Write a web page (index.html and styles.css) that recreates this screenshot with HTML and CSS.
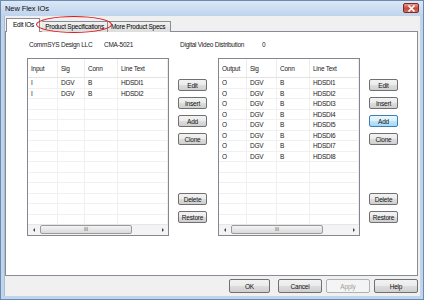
FILE: index.html
```html
<!DOCTYPE html>
<html lang="en">
<head>
  <meta charset="UTF-8" />
  <title>New Flex IOs</title>
  <link rel="stylesheet" href="styles.css">
</head>
<body>
  <div class="window">
    <div class="titlebar">
      <span class="title">New Flex IOs</span>
      <div class="close">
        <svg width="9" height="7" viewBox="0 0 9 7"><path d="M1.5 0.5 L7.5 6.5 M7.5 0.5 L1.5 6.5" stroke="#fff" stroke-width="1.6"/></svg>
      </div>
    </div>

    <div class="body">
      <div class="tabs">
        <div class="tab active">Edit IOs</div>
        <div class="tab">Product Specifications</div>
        <div class="tab last">More Product Specs</div>
      </div>
      <div class="mark"></div>

      <div class="panel">
        <div class="info">
          <span>CommSYS Design LLC</span>
          <span>CMA-5021</span>
          <span>Digital Video Distribution</span>
          <span>0</span>
        </div>

        <div class="lists">
          <div class="list in">
            <div class="rows" id="inRows"></div>
            <div class="hscroll">
              <span class="arrow left"></span>
              <div class="track"><div class="thumb">III</div></div>
              <span class="arrow right"></span>
            </div>
          </div>
          <div class="btncol">
            <button class="btn">Edit</button>
            <button class="btn">Insert</button>
            <button class="btn">Add</button>
            <button class="btn">Clone</button>
            <button class="btn push">Delete</button>
            <button class="btn">Restore</button>
          </div>

          <div class="list out">
            <div class="rows" id="outRows"></div>
            <div class="hscroll">
              <span class="arrow left"></span>
              <div class="track"><div class="thumb">III</div></div>
              <span class="arrow right"></span>
            </div>
          </div>
          <div class="btncol">
            <button class="btn">Edit</button>
            <button class="btn">Insert</button>
            <button class="btn default">Add</button>
            <button class="btn">Clone</button>
            <button class="btn push">Delete</button>
            <button class="btn">Restore</button>
          </div>
        </div>
      </div>

      <div class="footer">
        <button class="btn wide">OK</button>
        <button class="btn wide">Cancel</button>
        <button class="btn wide disabled">Apply</button>
        <button class="btn wide">Help</button>
      </div>
    </div>
  </div>

  <script>
    const inputs = [
      ['I', 'DGV', 'B', 'HDSDI1'],
      ['I', 'DGV', 'B', 'HDSDI2']
    ];
    const outputs = [];
    for (let i = 1; i <= 8; i++) outputs.push(['O', 'DGV', 'B', 'HDSDI' + i]);

    function fill(id, head, data) {
      const box = document.getElementById(id);
      const h = document.createElement('div');
      h.className = 'row head';
      head.forEach(t => {
        const c = document.createElement('span');
        c.textContent = t;
        h.appendChild(c);
      });
      box.appendChild(h);
      for (let r = 0; r < 15; r++) {
        const row = document.createElement('div');
        row.className = 'row';
        for (let k = 0; k < 4; k++) {
          const c = document.createElement('span');
          c.textContent = data[r] ? data[r][k] : '';
          row.appendChild(c);
        }
        box.appendChild(row);
      }
    }

    fill('inRows', ['Input', 'Sig', 'Conn', 'Line Text'], inputs);
    fill('outRows', ['Output', 'Sig', 'Conn', 'Line Text'], outputs);
  </script>
</body>
</html>
```

FILE: styles.css
```css
* {
  box-sizing: border-box;
}

body {
  margin: 0;
  font-family: 'Liberation Sans', Arial, sans-serif;
  font-size: 6.5px;
  letter-spacing: -0.25px;
  color: #000;
  background: #fff;
}

.window {
  width: 424px;
  height: 300px;
  background: #c0d5ec;
  border: 1px solid #6d8bb0;
  padding: 0 3px 3px 3px;
  display: flex;
  flex-direction: column;
}

.titlebar {
  height: 15px;
  margin: 0 -3px;
  padding: 0 4px 0 4px;
  display: flex;
  align-items: center;
  justify-content: space-between;
  background: linear-gradient(#dbe8f6, #bed3ec);
}

.title {
  font-size: 7.5px;
  letter-spacing: -0.1px;
  color: #111;
}

.close {
  width: 16px;
  height: 10px;
  margin-top: -1px;
  border: 1px solid #7a2b25;
  border-radius: 2px;
  background: linear-gradient(#e69a8e, #c74a3a 55%, #d0705e);
  display: flex;
  align-items: center;
  justify-content: center;
}

.body {
  position: relative;
  flex: 1;
  background: #f0f0f0;
  border-left: 1px solid #a9bcd2;
  padding: 2px 2px 0 0;
  display: flex;
  flex-direction: column;
}

.tabs {
  display: flex;
  align-items: flex-end;
  height: 14px;
  margin-left: 1px;
  position: relative;
  z-index: 1;
}

.tab {
  height: 11px;
  padding: 0 3px;
  line-height: 10px;
  border: 1px solid #898c95;
  border-bottom: none;
  border-left: none;
  background: linear-gradient(#f2f2f2, #dcdcdc);
  white-space: nowrap;
}

.tab.last {
  padding: 0 5px 0 3px;
}

.tab.active {
  height: 14px;
  padding: 1px 5px 0 6px;
  border-left: 1px solid #898c95;
  background: #fff;
  margin-right: 2px;
}

.mark {
  position: absolute;
  left: 31px;
  top: 0;
  width: 76px;
  height: 17px;
  border: 1.5px solid #e3161b;
  border-radius: 50%;
  z-index: 2;
}

.panel {
  height: 245px;
  margin-top: -1px;
  background: #fff;
  border: 1px solid #898c95;
  padding: 8px 0 0 21px;
}

.info {
  display: grid;
  grid-template-columns: 75px 76px 82px auto;
  padding-left: 2px;
  height: 10px;
  line-height: 10px;
  color: #222;
}

.info span {
  white-space: nowrap;
}

.lists {
  display: flex;
  margin-top: 8px;
}

.list {
  width: 142px;
  height: 178px;
  border: 1px solid #828790;
  display: flex;
  flex-direction: column;
}

.list.in { --cols: 30px 27px 33px 1fr; }
.list.out { --cols: 28px 30px 33px 1fr; }

.rows {
  flex: 1;
  overflow: hidden;
}

.row {
  display: grid;
  grid-template-columns: var(--cols);
  height: 10.5px;
  line-height: 10px;
  border-bottom: 1px solid #f0f0f0;
  color: #222;
}

.row span {
  padding-left: 3px;
  border-right: 1px solid #f0f0f0;
  white-space: nowrap;
  overflow: hidden;
}

.row.head {
  height: 19px;
  line-height: 12px;
  align-items: end;
  border-bottom: 1px solid #e3e3e3;
}

.row.head span {
  height: 100%;
  padding-top: 4px;
  border-right: 1px solid #ececec;
}

.hscroll {
  height: 11px;
  display: flex;
  align-items: center;
  background: #f3f3f3;
  border-top: 1px solid #e6e6e6;
}

.arrow {
  width: 11px;
  height: 10px;
  display: flex;
  align-items: center;
  justify-content: center;
}

.arrow::before {
  content: '';
  border-top: 2px solid transparent;
  border-bottom: 2px solid transparent;
}

.arrow.left::before { border-right: 2px solid #444; }
.arrow.right::before { border-left: 2px solid #444; }

.track {
  flex: 1;
  height: 10px;
  padding: 0 25px 0 1px;
}

.thumb {
  height: 9px;
  border: 1px solid #9a9a9a;
  border-radius: 2px;
  background: linear-gradient(#f4f4f4, #dadada);
  text-align: center;
  font-size: 5px;
  line-height: 7px;
  color: #555;
  letter-spacing: 0;
}

.btncol {
  width: 29px;
  margin: 0 11px 0 9px;
  padding: 21px 0 13px;
  display: flex;
  flex-direction: column;
  gap: 6px;
}

.btn {
  height: 12px;
  padding: 0;
  font-family: inherit;
  font-size: 6.5px;
  letter-spacing: -0.2px;
  color: #111;
  border: 1px solid #707070;
  border-radius: 2px;
  background: linear-gradient(#f2f2f2 0%, #ebebeb 50%, #dddddd 51%, #cfcfcf 100%);
}

.btn.push {
  margin-top: auto;
}

.btn.default {
  border-color: #3c7fb1;
  background: linear-gradient(#eaf6fd 0%, #d9f0fc 50%, #bee6fd 51%, #a7d9f5 100%);
}

.footer {
  flex: 1;
  display: flex;
  justify-content: flex-end;
  padding-top: 3px;
  gap: 4px;
}

.btn.wide {
  width: 44px;
  height: 14px;
}

.footer .btn:first-child {
  width: 41px;
  margin-right: 4px;
}

.btn.disabled {
  color: #a0a0a0;
  border-color: #adb2b5;
  background: #f4f4f4;
}
```
